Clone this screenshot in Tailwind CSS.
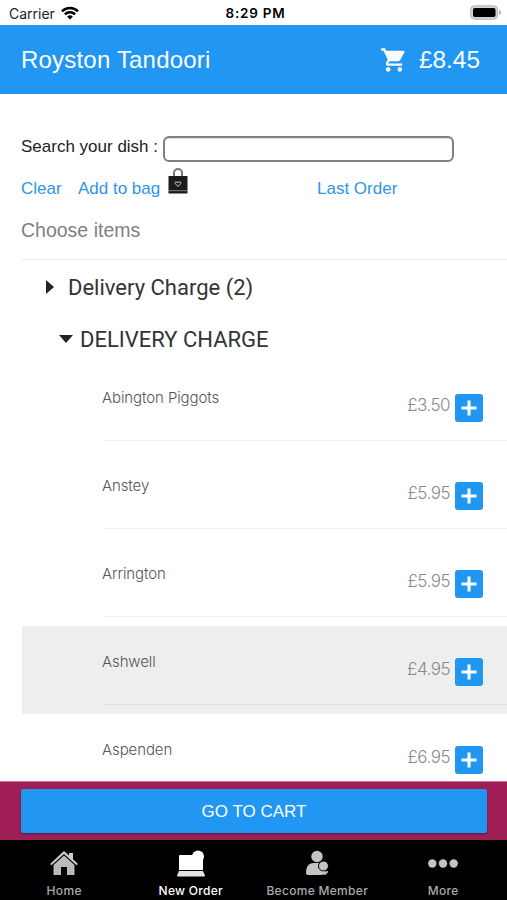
<!DOCTYPE html>
<html lang="en">
<head>
<meta charset="utf-8">
<title>Royston Tandoori</title>
<script src="https://cdn.jsdelivr.net/npm/@tailwindcss/browser@4"></script>
</head>
<body class="bg-white">
<svg class="hidden">
  <symbol id="add" viewBox="0 0 28 28"><rect width="28" height="28" rx="3" fill="#2196f3"/><path d="M14 6.500v15M6.500 14h15" stroke="#fff" stroke-width="3"/></symbol>
</svg>
<div class="w-[507px] h-[900px] flex flex-col overflow-hidden font-['Liberation_Sans',sans-serif] whitespace-nowrap">
  <div class="h-[25px] shrink-0 grid grid-cols-3 items-center pl-[9px] pr-[6px] pt-[2px] font-['Inter',sans-serif] text-[14px] text-[#222]">
    <div class="flex items-center gap-[6px]"><span>Carrier</span>
      <svg class="w-[18px] h-[14px] -mt-[2px]" viewBox="0 0 18 14" fill="none" stroke="#000" stroke-width="2.500"><path d="M1 5.300a11.300 11.300 0 0 1 16 0M3.900 8.300a7.200 7.200 0 0 1 10.200 0"/><path d="M9 13.600 6.100 10.700a4.100 4.100 0 0 1 5.800 0z" fill="#000" stroke="none"/></svg>
    </div>
    <div class="text-center font-semibold text-black text-[13.500px] tracking-[0.75px] pl-px">8:29 PM</div>
    <svg class="w-[31px] h-[15px] justify-self-end -mt-[2px]" viewBox="0 0 31 15"><rect x=".6" y=".8" width="27" height="13.400" rx="4" fill="#d4d4d4" stroke="#b4b4b4"/><rect x="3" y="3" width="22.500" height="9" rx="1.800" fill="#000"/><path d="M29 5v5q2-1 2-2.500T29 5" fill="#aaa"/></svg>
  </div>
  <header class="h-[69px] shrink-0 bg-[#2196f3] text-white flex items-center justify-between pl-[21px] pr-[27px] pt-px text-[24px]">
    <h1 class="tracking-[0.200px]">Royston Tandoori</h1>
    <div class="flex items-center gap-[11px]">
      <svg class="w-[28px] h-[28px]" viewBox="0 0 24 24" fill="#fff"><path d="M7 18c-1.100 0-1.990.9-1.990 2S5.900 22 7 22s2-.9 2-2-.9-2-2-2zM1 2v2h2l3.600 7.590-1.350 2.450c-.16.28-.25.61-.25.96 0 1.100.9 2 2 2h12v-2H7.420c-.14 0-.25-.11-.25-.25l.03-.12.9-1.630h7.450c.75 0 1.410-.41 1.750-1.030l3.580-6.490A1 1 0 0 0 20 4H5.210l-.94-2H1zm16 16c-1.100 0-1.990.9-1.990 2s.89 2 1.990 2 2-.9 2-2-.9-2-2-2z"/></svg>
      <span class="text-[24.400px]">£8.45</span>
    </div>
  </header>
  <main class="flex-1 min-h-0 overflow-hidden pl-[21px] text-[17px]">
    <label class="flex items-center h-[27px] mt-[41px] text-[#222]">
      <span class="w-[142px] pb-[3px]">Search your dish :</span>
      <input class="w-[291px] h-[26px] border-2 border-[#808080] rounded-[6px] bg-white shadow-[inset_0_1px_1px_#ddd]">
    </label>
    <div class="flex items-center h-[38px] text-[#2f95ec] pt-[15px]">
      <span class="w-[57px]">Clear</span><span class="w-[90px]">Add to bag</span>
      <svg class="w-[20px] h-[26px] -mt-[15px]" viewBox="0 0 20 26"><path d="M6 9V5a4 4 0 0 1 8 0v4" fill="none" stroke="#777" stroke-width="2"/><path d="M.5 8h19v17.500H.5z" fill="#1b1b1b"/><path d="M.5 22.700h19" stroke="#999" stroke-width=".8"/><path d="M10 18.500 7.200 15.500c-.6-2.200 1.800-2 2.800-.8 1-1.200 3.400-1.400 2.800.8z" fill="none" stroke="#ccc"/></svg>
      <span class="ml-[129px]">Last Order</span>
    </div>
    <div class="h-[60px] flex items-center text-[19.500px] text-[#808080] border-b border-[#eeeeee] pt-[2px]"><span>Choose items</span></div>
    <div class="h-[53px] flex items-center pl-[25px] pt-[1px] font-['Roboto',sans-serif] text-[22px] text-[#333]">
      <svg class="w-[8px] h-[14px] mr-[14px]" viewBox="0 0 8 14"><path d="M0 0l8 7-8 7z" fill="#222"/></svg>Delivery Charge (2)
    </div>
    <div class="h-[51px] flex items-center pl-[38px] pt-px font-['Roboto',sans-serif] text-[22px] text-[#333]">
      <svg class="w-[14px] h-[8px] mr-[7px]" viewBox="0 0 14 8"><path d="M0 0h14L7 8z" fill="#222"/></svg><span>DELIVERY CHARGE</span>
    </div>
    <ul id="items" class="-mt-[2px]"></ul>
  </main>
  <div class="h-[59px] shrink-0 bg-[#9e1e55] border-t border-[#c4799a] pl-[21px] pr-[20px] pt-[7px]">
    <button class="w-full h-[44px] rounded-[2px] bg-[#2196f3] text-white text-[17px] pt-px shadow-[0_1px_2px_#41204f]">GO TO CART</button>
  </div>
  <nav class="h-[60px] shrink-0 bg-black grid grid-cols-4 font-['Inter',sans-serif] text-[12px] font-medium tracking-[0.300px] text-[#aaa] pl-px">
    <div class="flex flex-col items-center pt-[10px]">
      <svg class="w-[30px] h-[26px]" viewBox="0 0 30 26"><path d="M1 14 15 1l5 4.600V3h4v6.300L29 14l-1.500 1.200L15 4 2.500 15.200z" fill="#ccc"/><path d="M15 5.500 25.500 15v10H18v-8h-6v8H4.500V15z" fill="#bbb"/></svg>
      <span class="mt-[6px] leading-[18px] tracking-[0.450px]">Home</span>
    </div>
    <div class="flex flex-col items-center pt-[10px] text-white">
      <svg class="w-[30px] h-[28px]" viewBox="0 0 30 28" fill="#fff"><path d="M3 6q0-1 1-1h13v15H3z"/><circle cx="22" cy="6.500" r="6"/><path d="M15 5h12v15H15z"/><path d="M3 21h24l2 4.500q0 1-1 1H2q-1 0-1-1z" fill="#e4e4e4"/></svg>
      <span class="mt-[4px] leading-[18px]">New Order</span>
    </div>
    <div class="flex flex-col items-center pt-[10px]">
      <svg class="w-[24px] h-[27px]" viewBox="0 0 24 27" fill="#c4c4c4"><circle cx="12" cy="6.500" r="5.700"/><path d="M1 23c0-7 3-10 8-10h5c3 0 5 2 6 10q-1 2-4 2H4q-3 0-3-2z"/><circle cx="18.500" cy="16" r="5" stroke="#000" stroke-width="1"/><path d="M17 22l6-1q0 3-4 4z"/></svg>
      <span class="mt-[5px] leading-[18px]">Become Member</span>
    </div>
    <div class="flex flex-col items-center pt-[10px] pr-px">
      <svg class="w-[30px] h-[26px]" viewBox="0 0 30 26" fill="#c4c4c4"><circle cx="4.300" cy="13.500" r="4.200"/><circle cx="15" cy="13.500" r="4.200"/><circle cx="25.700" cy="13.500" r="4.200"/></svg>
      <span class="mt-[6px] leading-[18px]">More</span>
    </div>
  </nav>
</div>
<script>
const rows = [["Abington Piggots","3.50"],["Anstey","5.95"],["Arrington","5.95"],["Ashwell","4.95"],["Aspenden","6.95"]];
document.getElementById("items").innerHTML = rows.map(([name, price]) => `
  <li class="h-[88px] pl-[82px] ml-[1px] ${name === "Ashwell" ? "bg-[#eeeeee]" : ""}">
    <div class="h-[79px] flex items-center border-b border-black/6 pr-[24px]">
      <span class="flex-1 -mt-[5px] -ml-[2px] font-['Inter',sans-serif] font-light text-[15px] tracking-[-0.100px] text-[#555]">${name}</span>
      <span class="mt-[10px] font-['Inter',sans-serif] font-light text-[17px] tracking-[-0.500px] text-[#888]">£${price}</span>
      <svg class="w-[28px] h-[28px] mt-[13px] ml-[5px]"><use href="#add"/></svg>
    </div>
  </li>`).join("");
</script>
</body>
</html>
